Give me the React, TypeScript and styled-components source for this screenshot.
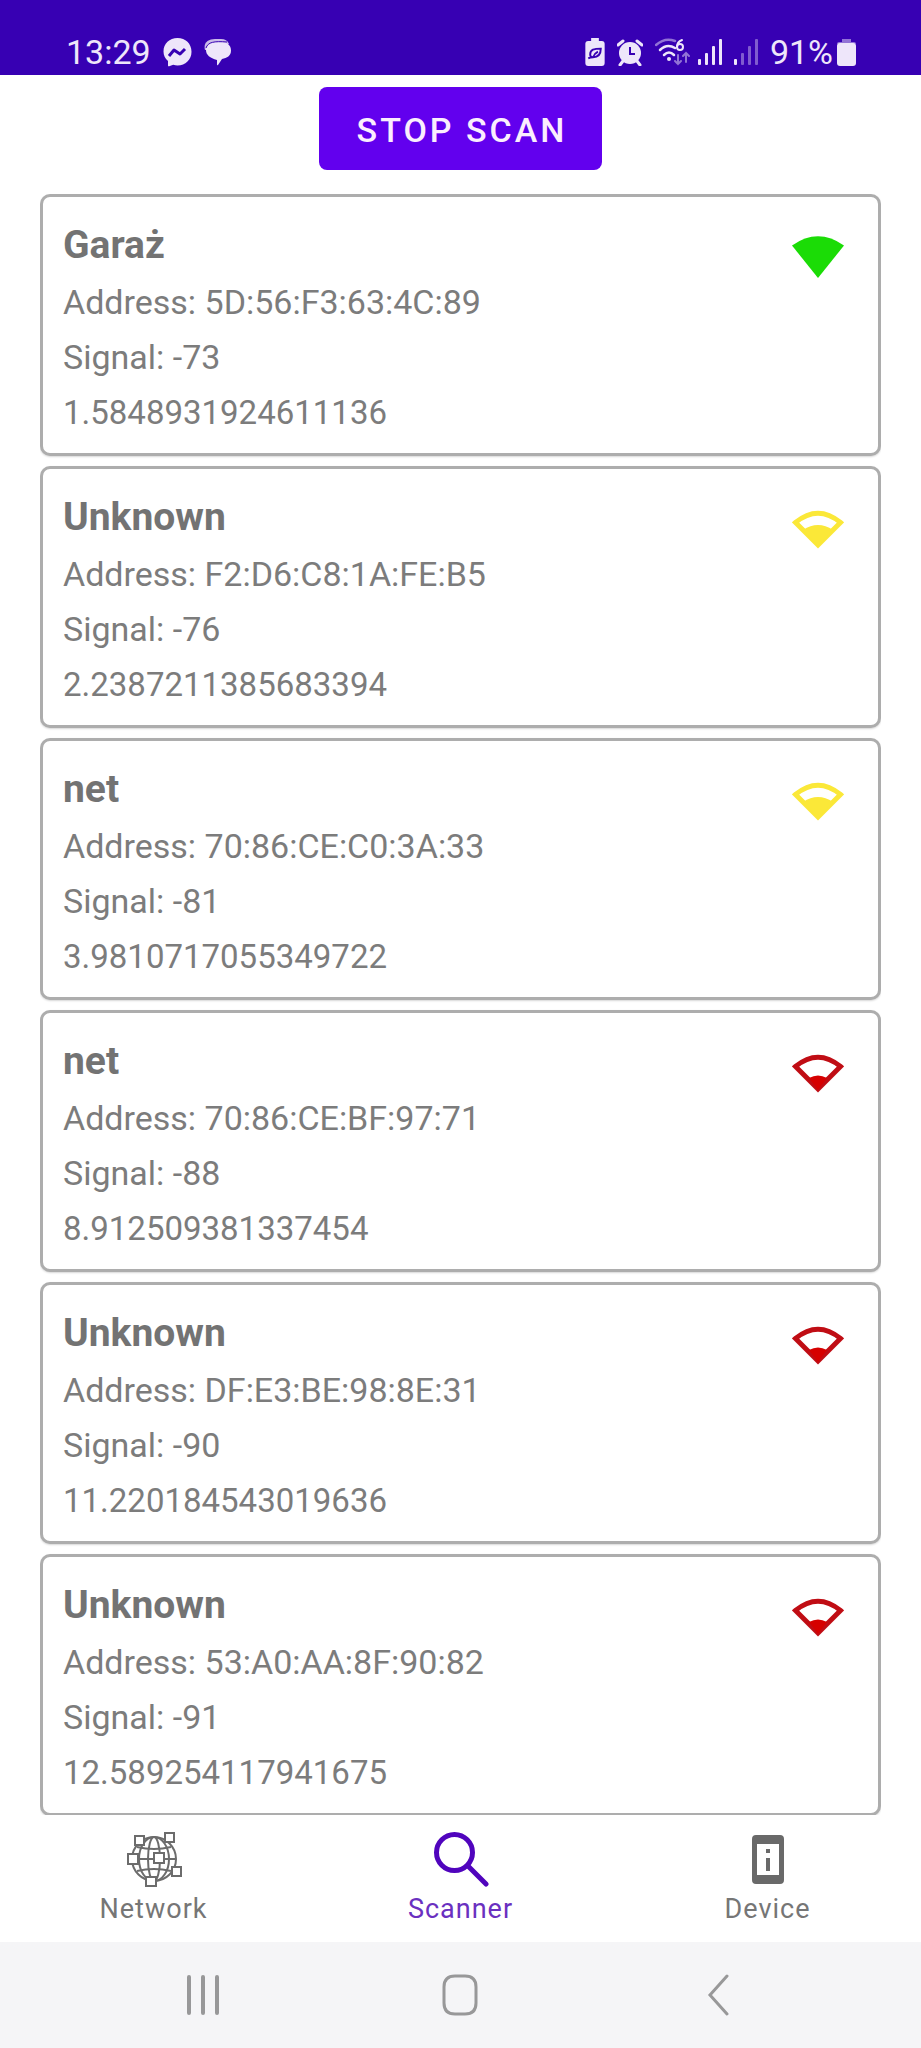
import React from "react";
import styled, { createGlobalStyle } from "styled-components";

const GlobalStyle = createGlobalStyle`
  * { box-sizing: border-box; }
  html, body, #root { height: 100%; }
  body { margin: 0; background: #fff; font-family: Roboto, "Noto Sans", sans-serif; color: #7c7c7c; }
  button { font: inherit; border: 0; padding: 0; background: none; cursor: pointer; }
`;

const Screen = styled.div`
  display: flex;
  flex-direction: column;
  height: 100vh;
  overflow: hidden;
`;

const StatusBar = styled.header`
  flex: none;
  display: flex;
  align-items: center;
  justify-content: space-between;
  height: 75px;
  padding: 29px 65px 0 66px;
  background: #3700b3;
  color: #eee6fa;
  font-size: 34px;
  line-height: 46px;
`;

const StatusGroup = styled.div<{ $gap: number }>`
  display: flex;
  align-items: center;
  gap: ${({ $gap }) => $gap}px;
  svg { display: block; }
`;

const Main = styled.main`
  flex: 1;
  min-height: 0;
  display: flex;
  flex-direction: column;
  align-items: center;
  gap: 24px;
  padding: 12px 40px 0;
`;

const ScanButton = styled.button`
  flex: none;
  height: 83px;
  padding: 2px 35px 0 38px;
  border-radius: 8px;
  background: #6200ee;
  color: #fbeefe;
  font-size: 34px;
  font-weight: 500;
  letter-spacing: 3px;
`;

const DeviceList = styled.ul`
  flex: 1;
  min-height: 0;
  overflow: hidden;
  align-self: stretch;
  display: flex;
  flex-direction: column;
  gap: 10px;
  margin: 0;
  padding: 0;
  list-style: none;
`;

const Card = styled.li`
  flex: none;
  display: flex;
  justify-content: space-between;
  align-items: flex-start;
  height: 262px;
  padding: 22px 34px 0 20px;
  border: 3px solid #adadad;
  border-radius: 10px;
  background: #fff;
  box-shadow: 0 1px 2px rgba(0, 0, 0, 0.16);
`;

const Name = styled.h2`
  margin: 0 0 4px;
  font-size: 39px;
  line-height: 52px;
  font-weight: 700;
  color: #737373;
`;

const Detail = styled.p`
  margin: 0;
  font-size: 34px;
  line-height: 55px;
`;

const Distance = styled(Detail)`
  font-size: 33px;
`;

const SignalSlot = styled.div`
  margin-top: 17px;
  svg { display: block; }
`;

const TabBar = styled.nav`
  flex: none;
  display: grid;
  grid-template-columns: repeat(3, 1fr);
  height: 127px;
  background: #fff;
`;

const Tab = styled.button<{ $active?: boolean }>`
  display: flex;
  flex-direction: column;
  align-items: center;
  gap: 6px;
  padding-top: 16px;
  color: ${({ $active }) => ($active ? "#6a30c0" : "#767676")};
  font-size: 27px;
  line-height: 32px;
  letter-spacing: 1px;
  svg { display: block; }
`;

const SystemBar = styled.footer`
  flex: none;
  display: flex;
  justify-content: space-around;
  height: 106px;
  padding: 0 74px;
  background: #f5f5f7;
`;

const SystemButton = styled.button`
  display: flex;
  align-items: center;
  justify-content: center;
  width: 120px;
  svg { display: block; }
`;

type Level = "full" | "medium" | "low";

const SIGNAL_COLORS: Record<Level, string> = { full: "#1bdc06", medium: "#fbe838", low: "#d60000" };

const SignalIcon = ({ level }: { level: Level }) => {
  const color = SIGNAL_COLORS[level];
  return (
    <svg width="52" height="44" viewBox="0 0 52 44" role="img" aria-label={`Signal ${level}`}>
      {level === "full" ? (
        <path d="M0 9.500Q26 -9 52 9.500L26 42Z" fill={color} />
      ) : (
        <>
          <path
            d="M3.500 14.500Q26 -4 48.500 14.500L26 37Z"
            fill="none"
            stroke={level === "low" ? "#c00d14" : color}
            strokeWidth="5"
          />
          {level === "medium" ? (
            <path d="M11 22Q26 12 41 22L26 38Z" fill={color} />
          ) : (
            <path d="M17 26Q26 21 35 26L26 38Z" fill={color} />
          )}
        </>
      )}
    </svg>
  );
};

const MessengerIcon = () => (
  <svg width="29" height="30" viewBox="0 0 29 30" aria-hidden="true">
    <path d="M14.500 1C6.500 1 .5 6.500 .5 14.500c0 4 1.500 7 4.500 9.500v4.500c0 .8.600 1 1.200.800l4-1.500c1.400.4 2.800.6 4.300.6 8 0 14-5.700 14-13.700S22.500 1 14.500 1Z" fill="currentColor" />
    <path d="M6 19l5-6 6 4 5-5" fill="none" stroke="#3700b3" strokeWidth="3" strokeLinejoin="round" />
  </svg>
);

const ChatIcon = () => (
  <svg width="28" height="28" viewBox="0 0 28 28" aria-hidden="true">
    <path d="M1 12C-1 5 4 1 11 1h6q6 0 8 5L10 12Z" fill="#cbbbe9" />
    <path d="M2 12C2 6 7 4 12 4h5c6 0 10 3 10 8.500S23 20 18 21l-4 6q-1 1-1-1v-4C6 20 2 17 2 12Z" fill="currentColor" />
    <path d="M2 10C4 4 10 3 23 4" fill="none" stroke="#3700b3" strokeWidth="1" />
  </svg>
);

const BatteryLeafIcon = () => (
  <svg width="20" height="28" viewBox="0 0 20 29" aria-hidden="true">
    <path d="M6 0h8v3h3q3 0 3 3v20q0 3-3 3H3q-3 0-3-3V6q0-3 3-3h3Z" fill="currentColor" />
    <path d="M3 21c2-1 3-1 5-1 6 0 8-4 8-9-7 0-11 1-11 6 0 2 1 3 3 3 1-3 3-5 5-6" fill="none" stroke="#3700b3" strokeWidth="2" />
  </svg>
);

const AlarmIcon = () => (
  <svg width="26" height="27" viewBox="0 0 26 27" aria-hidden="true">
    <circle cx="13" cy="14" r="11" fill="currentColor" />
    <path d="M1 6l5-4M25 6l-5-4M6 22l-3 4M20 22l3 4" stroke="currentColor" strokeWidth="3" strokeLinecap="round" />
    <path d="M13 8v7h5" fill="none" stroke="#3700b3" strokeWidth="2" />
  </svg>
);

const WifiIcon = () => (
  <svg width="35" height="28" viewBox="0 0 35 28" aria-hidden="true">
    <g fill="none" stroke="currentColor" strokeWidth="2.500" strokeLinecap="round">
      <path d="M1 7Q10 -1 20 3" opacity=".5" />
      <path d="M5 12Q12 5 20 10M9 17Q14 12 19 17" />
      <path d="M27 2Q22 4 22 9" strokeWidth="2" />
      <circle cx="25" cy="9" r="3" strokeWidth="2" />
      <path d="M23 17v9m-3-3l3 3 3-3M31 24v-9m-3 3l3-3 3 3" strokeWidth="2" opacity=".5" />
    </g>
    <circle cx="14" cy="21" r="2" fill="currentColor" />
  </svg>
);

const BarsIcon = ({ weak }: { weak?: boolean }) => (
  <svg width="24" height="26" viewBox="0 0 24 26" aria-hidden="true" fill="currentColor">
    <rect x="0" y="20" width="3" height="6" rx="1" />
    <g opacity={weak ? 0.4 : 1}>
      <rect x="7" y="14" width="3" height="12" rx="1" />
      <rect x="14" y="7" width="3" height="19" rx="1" />
      <rect x="21" y="0" width="3" height="26" rx="1" />
    </g>
  </svg>
);

const BatteryIcon = () => (
  <svg width="19" height="27" viewBox="0 0 19 27" aria-hidden="true" fill="currentColor">
    <path d="M5 0h9v3h3q2 0 2 2H0q0-2 2-2h3Z" opacity=".5" />
    <rect y="4" width="19" height="23" rx="3" />
  </svg>
);

const GlobeIcon = () => (
  <svg width="56" height="56" viewBox="0 0 56 56" aria-hidden="true" fill="none" stroke="#6c6c6c" strokeWidth="2">
    <circle cx="28" cy="28" r="22" />
    <ellipse cx="28" cy="28" rx="15" ry="22" />
    <ellipse cx="28" cy="28" rx="6" ry="22" />
    <path d="M6 28h44M11 16q17 4 34 0M11 40q17-4 34 0" />
    <g fill="#fff">
      <rect x="9" y="5" width="9" height="9" />
      <rect x="39" y="2" width="9" height="9" />
      <rect x="2" y="23" width="10" height="10" />
      <rect x="28" y="22" width="10" height="10" />
      <rect x="46" y="36" width="9" height="9" />
      <rect x="20" y="46" width="10" height="9" />
    </g>
  </svg>
);

const SearchIcon = () => (
  <svg width="56" height="56" viewBox="0 0 56 56" aria-hidden="true" fill="none" stroke="#5004bd" strokeWidth="5">
    <circle cx="21.500" cy="21.500" r="18" />
    <path d="M35 35l18 18" strokeLinecap="round" />
  </svg>
);

const PhoneInfoIcon = () => (
  <svg width="32" height="56" viewBox="0 0 32 56" aria-hidden="true" fill="#696969">
    <path fillRule="evenodd" d="M4 4h24q4 0 4 4v41q0 4-4 4H4q-4 0-4-4V8q0-4 4-4ZM5 13v31h22V13Z" />
    <rect x="14" y="18" width="4" height="4" />
    <rect x="14" y="27" width="4" height="13" />
  </svg>
);

const devices: { name: string; address: string; signal: number; distance: string; level: Level }[] = [
  { name: "Garaż", address: "5D:56:F3:63:4C:89", signal: -73, distance: "1.5848931924611136", level: "full" },
  { name: "Unknown", address: "F2:D6:C8:1A:FE:B5", signal: -76, distance: "2.2387211385683394", level: "medium" },
  { name: "net", address: "70:86:CE:C0:3A:33", signal: -81, distance: "3.9810717055349722", level: "medium" },
  { name: "net", address: "70:86:CE:BF:97:71", signal: -88, distance: "8.912509381337454", level: "low" },
  { name: "Unknown", address: "DF:E3:BE:98:8E:31", signal: -90, distance: "11.220184543019636", level: "low" },
  { name: "Unknown", address: "53:A0:AA:8F:90:82", signal: -91, distance: "12.589254117941675", level: "low" },
];

export default function App() {
  return (
    <Screen>
      <GlobalStyle />
      <StatusBar>
        <StatusGroup $gap={12}>
          <span>13:29</span>
          <MessengerIcon />
          <ChatIcon />
        </StatusGroup>
        <StatusGroup $gap={12}>
          <BatteryLeafIcon />
          <AlarmIcon />
          <StatusGroup $gap={8}>
            <WifiIcon />
            <BarsIcon />
          </StatusGroup>
          <BarsIcon weak />
          <StatusGroup $gap={4}>
            <span>91%</span>
            <BatteryIcon />
          </StatusGroup>
        </StatusGroup>
      </StatusBar>
      <Main>
        <ScanButton type="button">STOP SCAN</ScanButton>
        <DeviceList>
          {devices.map((device) => (
            <Card key={device.address}>
              <div>
                <Name>{device.name}</Name>
                <Detail>Address: {device.address}</Detail>
                <Detail>Signal: {device.signal}</Detail>
                <Distance>{device.distance}</Distance>
              </div>
              <SignalSlot>
                <SignalIcon level={device.level} />
              </SignalSlot>
            </Card>
          ))}
        </DeviceList>
      </Main>
      <TabBar aria-label="Sections">
        <Tab type="button">
          <GlobeIcon />
          Network
        </Tab>
        <Tab type="button" $active aria-current="page">
          <SearchIcon />
          Scanner
        </Tab>
        <Tab type="button">
          <PhoneInfoIcon />
          Device
        </Tab>
      </TabBar>
      <SystemBar>
        <SystemButton type="button" aria-label="Recent apps">
          <svg width="34" height="42" viewBox="0 0 34 42" stroke="#989899" strokeWidth="4" strokeLinecap="round">
            <path d="M3 3v36M17 3v36M31 3v36" />
          </svg>
        </SystemButton>
        <SystemButton type="button" aria-label="Home">
          <svg width="36" height="42" viewBox="0 0 36 42" fill="none" stroke="#989899" strokeWidth="3">
            <path d="M13 2h10q11 0 11 11v16q0 11-11 11H13Q2 40 2 29V13Q2 2 13 2Z" />
          </svg>
        </SystemButton>
        <SystemButton type="button" aria-label="Back">
          <svg width="22" height="44" viewBox="0 0 22 44" fill="none" stroke="#989899" strokeWidth="3" strokeLinecap="round">
            <path d="M20 3L3 22l17 19" />
          </svg>
        </SystemButton>
      </SystemBar>
    </Screen>
  );
}
